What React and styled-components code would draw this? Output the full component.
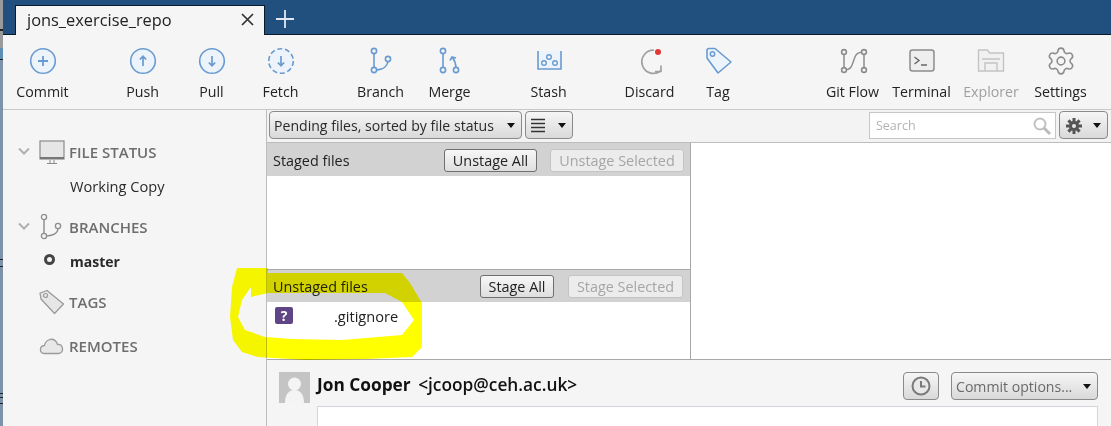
import React from 'react';
import styled, { createGlobalStyle } from 'styled-components';
import { Settings } from 'lucide-react';

const Global = createGlobalStyle`
  html, body { margin: 0; padding: 0; background: #f5f5f5; }
  body { font-family: "Open Sans", "Noto Sans", sans-serif; color: #222; overflow: hidden; }
  * { box-sizing: border-box; }
`;

const Window = styled.div`
  position: relative;
  width: 1111px;
  height: 426px;
  display: flex;
  overflow: hidden;
  background: #f5f5f5;
`;
const EdgeStripe = styled.div`
  width: 3px;
  flex: none;
  background: linear-gradient(
    #9a9a9a 0 29px, #222 29px 31px, #9a9a9a 31px 48px, #5f8fb5 48px 59px, #222 59px 60px,
    #7c93a9 60px 259px, #222 259px 260px, #7c93a9 260px 266px, #222 266px 267px,
    #7c93a9 267px 393px, #222 393px 394px, #7c93a9 394px 397px, #222 397px 398px,
    #7c93a9 398px 403px, #222 403px 404px, #7c93a9 404px
  );
`;
const Frame = styled.div`
  flex: 1;
  min-width: 0;
  display: flex;
  flex-direction: column;
`;
const TabBar = styled.div`
  height: 35px;
  flex: none;
  display: flex;
  align-items: flex-end;
  padding-left: 12px;
  background: #21507f;
  border-bottom: 1px solid #0b1a2a;
`;
const Tab = styled.div`
  width: 250px;
  height: 30px;
  margin-bottom: -1px;
  padding: 0 10px 2px 11px;
  display: flex;
  align-items: center;
  justify-content: space-between;
  background: #f5f5f5;
  border: 1px solid #0b1a2a;
  border-bottom: none;
  font-size: 16.4px;
  color: #222;
`;
const NewTab = styled.div`
  width: 20px;
  height: 20px;
  margin: 0 0 5px 10px;
`;
const Toolbar = styled.div`
  height: 75px;
  flex: none;
  display: flex;
  padding-left: 5px;
  background: #f5f5f5;
  border-bottom: 1px solid #c8c8c8;
`;
const ToolButton = styled.div`
  width: ${p => p.$w || 69}px;
  margin-left: ${p => p.$gap || 0}px;
  flex: none;
  display: flex;
  flex-direction: column;
  align-items: center;
  padding-top: 12px;
  font-size: 14.2px;
  line-height: 19px;
  color: ${p => (p.$off ? '#a0a0a0' : '#222')};
  white-space: nowrap;
`;
const ToolIcon = styled.svg`
  width: 28px;
  height: 28px;
  margin-bottom: 7px;
  fill: none;
  overflow: visible;
`;
const Body = styled.div`
  flex: 1;
  min-height: 0;
  display: flex;
`;
const Sidebar = styled.div`
  width: 264px;
  flex: none;
  padding-top: 27px;
  border-right: 1px solid #bdbdbd;
  background: #f5f5f5;
`;
const SideHead = styled.div`
  height: 30px;
  display: flex;
  align-items: center;
  margin-bottom: ${p => p.$after || 0}px;
  font-size: 15px;
  font-weight: 600;
  color: #6e6e6e;
`;
const Chevron = styled.svg`
  width: 12px;
  height: 8px;
  margin: 0 0 2px 15px;
  flex: none;
`;
const BlankChevron = styled.div`
  width: 27px;
  flex: none;
`;
const SideIcon = styled.svg`
  width: 26px;
  height: 26px;
  margin: 0 4px 0 9px;
  flex: none;
  fill: none;
`;
const SideItem = styled.div`
  height: 20px;
  margin-bottom: ${p => p.$after || 0}px;
  padding-left: 67px;
  display: flex;
  align-items: center;
  font-size: ${p => (p.$bold ? 14 : 14.6)}px;
  font-weight: ${p => (p.$bold ? 700 : 400)};
  color: #2a2a2a;
  position: relative;
`;
const CurrentDot = styled.span`
  position: absolute;
  left: 41px;
  top: 3px;
  width: 11px;
  height: 11px;
  border: 3px solid #444;
  border-radius: 50%;
`;
const Main = styled.div`
  flex: 1;
  min-width: 0;
  display: flex;
  flex-direction: column;
`;
const FilterBar = styled.div`
  height: 33px;
  flex: none;
  display: flex;
  align-items: center;
  gap: 3px;
  padding: 0 3px 2px 2px;
  background: #f3f3f3;
  border-bottom: 1px solid #bdbdbd;
`;
const Combo = styled.div`
  width: ${p => p.$w}px;
  height: 28px;
  flex: none;
  display: flex;
  align-items: center;
  justify-content: space-between;
  padding: 1px 6px 0 4px;
  border: 1px solid #8a8a8a;
  border-radius: 4px;
  background: linear-gradient(#f6f6f6, #d9d9d9);
  font-size: 14.1px;
  color: ${p => (p.$muted ? '#6a6a6a' : '#2a2a2a')};
`;
const Caret = styled.span`
  width: 0;
  height: 0;
  flex: none;
  border-left: 4.5px solid transparent;
  border-right: 4.5px solid transparent;
  border-top: 5px solid #111;
`;
const SearchBox = styled.div`
  width: 187px;
  height: 27px;
  margin-left: auto;
  flex: none;
  display: flex;
  align-items: center;
  justify-content: space-between;
  padding: 1px 3px 0 6px;
  border: 1px solid #c6c6c6;
  background: #fff;
  font-size: 12.5px;
  color: #b4b4b4;
`;
const Panes = styled.div`
  flex: 1;
  min-height: 0;
  display: flex;
`;
const FileColumn = styled.div`
  width: 424px;
  flex: none;
  display: flex;
  flex-direction: column;
  border-right: 1px solid #a8a8a8;
`;
const Section = styled.div`
  height: ${p => p.$h}px;
  flex: none;
  background: #fff;
  border-top: ${p => (p.$ruled ? '1px solid #a8a8a8' : 'none')};
`;
const SectionHead = styled.div`
  height: ${p => p.$h}px;
  display: flex;
  align-items: center;
  padding: ${p => p.$top}px ${p => p.$right}px 4px 6px;
  background: #d2d2d2;
  font-size: 14.4px;
  color: #222;
`;
const SectionTitle = styled.span`
  margin-right: auto;
`;
const HeadButton = styled.div`
  width: ${p => p.$w}px;
  height: 23px;
  margin-left: ${p => p.$gap || 0}px;
  flex: none;
  display: flex;
  align-items: center;
  justify-content: center;
  font-size: 14.4px;
  border-radius: 3px;
  border: 1px solid ${p => (p.$off ? '#c4c4c4' : '#6f6f6f')};
  background: ${p => (p.$off ? '#ececec' : 'linear-gradient(#f7f7f7, #dedede)')};
  color: ${p => (p.$off ? '#a6a6a6' : '#222')};
`;
const FileRow = styled.div`
  height: 27px;
  display: flex;
  align-items: center;
  padding: 1px 0 0 8px;
  font-size: 14.6px;
  color: #222;
`;
const StatusBadge = styled.span`
  width: 18px;
  height: 17px;
  flex: none;
  display: flex;
  align-items: center;
  justify-content: center;
  border-radius: 2px;
  background: #5f4585;
  color: #fff;
  font-size: 14px;
  font-weight: 700;
  margin: 0 41px 2px 0;
`;
const DiffPane = styled.div`
  flex: 1;
  background: #fff;
`;
const CommitArea = styled.div`
  height: 67px;
  flex: none;
  border-top: 1px solid #a8a8a8;
  background: #f5f5f5;
  display: flex;
  padding: 12px 13px 0 12px;
`;
const Avatar = styled.svg`
  width: 31px;
  height: 31px;
  flex: none;
  margin-right: 7px;
`;
const CommitMain = styled.div`
  flex: 1;
  display: flex;
  flex-direction: column;
`;
const CommitTop = styled.div`
  height: 28px;
  margin-bottom: 6px;
  display: flex;
  align-items: center;
  gap: 12px;
`;
const Author = styled.div`
  margin-right: auto;
  padding-bottom: 3px;
  font-size: 17.3px;
  font-weight: 700;
  color: #111;
`;
const AuthorMail = styled.span`
  margin-left: 3px;
  font-weight: 600;
`;
const ClockButton = styled.div`
  width: 36px;
  height: 28px;
  display: flex;
  align-items: center;
  justify-content: center;
  border: 1px solid #8a8a8a;
  border-radius: 4px;
  background: linear-gradient(#f6f6f6, #d9d9d9);
`;
const MessageBox = styled.div`
  flex: 1;
  background: #fff;
  border: 1px solid #d4d4dc;
  border-bottom: none;
`;
const Highlight = styled.svg`
  position: absolute;
  left: 0;
  top: 0;
  width: 1111px;
  height: 426px;
  mix-blend-mode: multiply;
  pointer-events: none;
`;

const BLUE = '#6a9bd0';
const BFILL = '#edf3fa';
const GREY = '#8c8c8c';

const Node = ({ cx, cy, r = 2.6, c = BLUE, w = 1.6 }) => (
  <circle cx={cx} cy={cy} r={r} fill="#f5f5f5" stroke={c} strokeWidth={w} />
);

const icons = {
  commit: <>
    <circle cx="14" cy="14" r="12.3" stroke={BLUE} strokeWidth="1.6" fill={BFILL} />
    <path d="M14 9v10M9 14h10" stroke={BLUE} strokeWidth="1.8" />
  </>,
  push: <>
    <circle cx="14" cy="14" r="12.3" stroke={BLUE} strokeWidth="1.6" fill={BFILL} />
    <path d="M14 19V9.5M10.8 12.5 14 9.3l3.2 3.2" stroke={BLUE} strokeWidth="1.7" />
  </>,
  pull: <>
    <circle cx="14" cy="14" r="12.3" stroke={BLUE} strokeWidth="1.6" fill={BFILL} />
    <path d="M14 9v9.5M10.8 15.5 14 18.7l3.2-3.2" stroke={BLUE} strokeWidth="1.7" />
  </>,
  fetch: <>
    <circle cx="14" cy="14" r="12.3" stroke={BLUE} strokeWidth="1.6" strokeDasharray="5 2.7" fill={BFILL} />
    <path d="M14 9v9.5M10.8 15.5 14 18.7l3.2-3.2" stroke={BLUE} strokeWidth="1.7" />
  </>,
  branch: <>
    <path d="M7 5v18M21 13c0 6-5 10-14 10" stroke={BLUE} strokeWidth="1.6" />
    <Node cx="7" cy="4" /><Node cx="21" cy="12" /><Node cx="7" cy="23" />
  </>,
  merge: <>
    <path d="M7 5v18" stroke={BLUE} strokeWidth="1.6" />
    <path d="M20 21c0-4-1-7-3.5-10.5M14 13.5l2-3.5 4 1" stroke={BLUE} strokeWidth="1.6" />
    <Node cx="7" cy="4" /><Node cx="7" cy="23" /><Node cx="20" cy="23" />
  </>,
  stash: <>
    <path d="M3 4v18h23V4" stroke={BLUE} strokeWidth="1.6" fill={BFILL} />
    <Node cx="14" cy="10" r="2.3" w="1.4" /><Node cx="9" cy="16" r="2.3" w="1.4" /><Node cx="20" cy="16" r="2.3" w="1.4" />
  </>,
  discard: <>
    <path d="M18 3.2A11.6 11.6 0 1 0 24.5 24" stroke="#a0a0a0" strokeWidth="1.7" />
    <path d="M25 18.5v6h-6" stroke="#a0a0a0" strokeWidth="1.7" />
    <circle cx="22" cy="5" r="3" fill="#e03a34" />
  </>,
  tag: <>
    <path d="M3 11 3 3.5Q3 1.5 5 1.5L11 1.5 27 15 14 26Z" stroke={BLUE} strokeWidth="1.6" strokeLinejoin="round" fill={BFILL} />
    <circle cx="8.5" cy="7" r="2.2" stroke={BLUE} strokeWidth="1.5" />
  </>,
  gitflow: <>
    <path d="M5 5v18M25 5v18M5 23c7 0 8-4 9.5-9s2.5-9 10.5-9" stroke={GREY} strokeWidth="1.5" />
    <Node cx="5" cy="5" c={GREY} r="2.4" /><Node cx="5" cy="23" c={GREY} r="2.4" /><Node cx="25" cy="5" c={GREY} r="2.4" /><Node cx="25" cy="23" c={GREY} r="2.4" />
  </>,
  terminal: <>
    <rect x="2" y="3" width="24" height="21" rx="2.5" stroke={GREY} strokeWidth="1.5" fill="#eeeeee" />
    <path d="M6.5 10l4.5 3.5-4.5 3.5M13 18h6" stroke="#666" strokeWidth="1.4" />
  </>,
  explorer: <>
    <path d="M1.5 24V3h9l2 3h14v18Z" stroke="#c4c4c4" strokeWidth="1.4" fill="#f1f1f1" />
    <path d="M8 24v-8h12v8M5 12h18" stroke="#c4c4c4" strokeWidth="1.4" />
  </>,
  settings: <Settings x={-1.5} y={-1.5} size={31} color={GREY} strokeWidth={1.2} />,
};

const tools = [
  { k: 'commit', t: 'Commit' },
  { k: 'push', t: 'Push', gap: 31 },
  { k: 'pull', t: 'Pull' },
  { k: 'fetch', t: 'Fetch' },
  { k: 'branch', t: 'Branch', gap: 31 },
  { k: 'merge', t: 'Merge' },
  { k: 'stash', t: 'Stash', gap: 30 },
  { k: 'discard', t: 'Discard', gap: 32 },
  { k: 'tag', t: 'Tag', w: 68 },
  { k: 'gitflow', t: 'Git Flow', gap: 66 },
  { k: 'terminal', t: 'Terminal' },
  { k: 'explorer', t: 'Explorer', off: true, w: 70 },
  { k: 'settings', t: 'Settings' },
];

const Down = () => (
  <Chevron viewBox="0 0 12 8"><path d="M1 1.5 6 6.5 11 1.5" fill="none" stroke="#b0b0b0" strokeWidth="2" /></Chevron>
);

const YELLOW = 'M237 268 268 268 268 273 402 273 410 283 422 303 422 347 412 357 365 359 305 360 258 357 242 352 233 340 230 317 232 287Z M251 287 251 297 268 293 385 293 402 302 414 320 402 335 342 340 292 339 265 337 245 330 238 317 242 300Z';

export default function App() {
  return (
    <Window>
      <Global />
      <EdgeStripe />
      <Frame>
        <TabBar>
          <Tab>
            <span>jons_exercise_repo</span>
            <svg width="13" height="13" viewBox="0 0 13 13"><path d="M1 1l11 11M12 1 1 12" stroke="#333" strokeWidth="1.7" /></svg>
          </Tab>
          <NewTab>
            <svg width="20" height="20" viewBox="0 0 20 20"><path d="M10 1v18M1 10h18" stroke="#dfe8f2" strokeWidth="1.8" /></svg>
          </NewTab>
        </TabBar>
        <Toolbar>
          {tools.map(t => (
            <ToolButton key={t.k} $gap={t.gap} $w={t.w} $off={t.off}>
              <ToolIcon viewBox="0 0 28 28">{icons[t.k]}</ToolIcon>
              {t.t}
            </ToolButton>
          ))}
        </Toolbar>
        <Body>
          <Sidebar>
            <SideHead $after={9}>
              <Down />
              <SideIcon viewBox="0 0 26 26">
                <rect x="1" y="2" width="24" height="18" fill="#e6e6e6" stroke="#8a8a8a" strokeWidth="1.2" />
                <path d="M1 19h24" stroke="#777" strokeWidth="2" />
                <path d="M11 21v3M15 21v3M8 24.5h10" stroke="#8a8a8a" strokeWidth="1" />
              </SideIcon>
              FILE STATUS
            </SideHead>
            <SideItem $after={16}>Working Copy</SideItem>
            <SideHead $after={9}>
              <Down />
              <SideIcon viewBox="0 0 26 26">
                <path d="M5 4v18M19 14c0 5-5 8-14 8" stroke="#8c8c8c" strokeWidth="1.4" />
                <Node cx="5" cy="3" c="#8c8c8c" w="1.3" /><Node cx="19" cy="12" c="#8c8c8c" w="1.3" /><Node cx="5" cy="22" c="#8c8c8c" w="1.3" />
              </SideIcon>
              BRANCHES
            </SideHead>
            <SideItem $bold $after={16}><CurrentDot />master</SideItem>
            <SideHead $after={14}>
              <BlankChevron />
              <SideIcon viewBox="0 0 26 26">
                <path d="M1 4 8 1.5 24.5 15 15.5 24.5 2 10Z" fill="#e6e6e6" stroke="#9a9a9a" strokeWidth="1.3" strokeLinejoin="round" />
                <circle cx="6.5" cy="6.5" r="2" fill="none" stroke="#9a9a9a" strokeWidth="1.2" />
              </SideIcon>
              TAGS
            </SideHead>
            <SideHead>
              <BlankChevron />
              <SideIcon viewBox="0 0 26 26">
                <path d="M6 20.5c-6 0-6-7.5-.5-8C6.5 7 13 4 17 8.500c1 1 1.200 2 1.500 3 6-.5 7 8.500 1 9Z" fill="#e8e8e8" stroke="#9a9a9a" strokeWidth="1.3" />
              </SideIcon>
              REMOTES
            </SideHead>
          </Sidebar>
          <Main>
            <FilterBar>
              <Combo $w={253}>Pending files, sorted by file status<Caret /></Combo>
              <Combo $w={48}>
                <svg width="16" height="15" viewBox="0 0 16 15"><path d="M1 1.5h14M1 5.5h14M1 9.5h14M1 13.5h14" stroke="#333" strokeWidth="1.3" /></svg>
                <Caret />
              </Combo>
              <SearchBox>
                Search
                <svg width="20" height="20" viewBox="0 0 20 20"><circle cx="8" cy="8" r="5.5" fill="#fff" stroke="#c0c0c0" strokeWidth="2" /><path d="M12 12l6 6" stroke="#bbb" strokeWidth="3" /></svg>
              </SearchBox>
              <Combo $w={49}>
                <svg width="20" height="20" viewBox="0 0 20 20"><path d="M10 2v16M2 10h16M4.4 4.4l11.2 11.2M15.6 4.400 4.400 15.600" stroke="#555" strokeWidth="3" /><circle cx="10" cy="10" r="5" fill="#555" /><circle cx="10" cy="10" r="2" fill="#e8e8e8" /></svg>
                <Caret />
              </Combo>
            </FilterBar>
            <Panes>
              <FileColumn>
                <Section $h={126}>
                  <SectionHead $h={33} $top={6} $right={6}>
                    <SectionTitle>Staged files</SectionTitle>
                    <HeadButton $w={93}>Unstage All</HeadButton>
                    <HeadButton $w={134} $gap={13} $off>Unstage Selected</HeadButton>
                  </SectionHead>
                </Section>
                <Section $h={90} $ruled>
                  <SectionHead $h={32} $top={5} $right={7}>
                    <SectionTitle>Unstaged files</SectionTitle>
                    <HeadButton $w={74}>Stage All</HeadButton>
                    <HeadButton $w={115} $gap={14} $off>Stage Selected</HeadButton>
                  </SectionHead>
                  <FileRow><StatusBadge>?</StatusBadge>.gitignore</FileRow>
                </Section>
              </FileColumn>
              <DiffPane />
            </Panes>
            <CommitArea>
              <Avatar viewBox="0 0 31 31">
                <rect width="31" height="31" fill="#c4c4c4" />
                <circle cx="15.5" cy="12" r="6.5" fill="#f4f4f4" />
                <path d="M6 31c0-9 4-13 9.5-13S25 22 25 31Z" fill="#f4f4f4" />
              </Avatar>
              <CommitMain>
                <CommitTop>
                  <Author>Jon Cooper <AuthorMail>&lt;jcoop@ceh.ac.uk&gt;</AuthorMail></Author>
                  <ClockButton>
                    <svg width="20" height="20" viewBox="0 0 20 20"><circle cx="10" cy="10" r="8.5" fill="#e8e8e8" stroke="#7a7a7a" strokeWidth="2" /><path d="M10 5v5.5h4.5" fill="none" stroke="#7a7a7a" strokeWidth="2" /></svg>
                  </ClockButton>
                  <Combo $w={147} $muted>Commit options...<Caret /></Combo>
                </CommitTop>
                <MessageBox />
              </CommitMain>
            </CommitArea>
          </Main>
        </Body>
      </Frame>
      <Highlight viewBox="0 0 1111 426">
        <path d={YELLOW} fill="#ffff00" fillRule="evenodd" />
      </Highlight>
    </Window>
  );
}
